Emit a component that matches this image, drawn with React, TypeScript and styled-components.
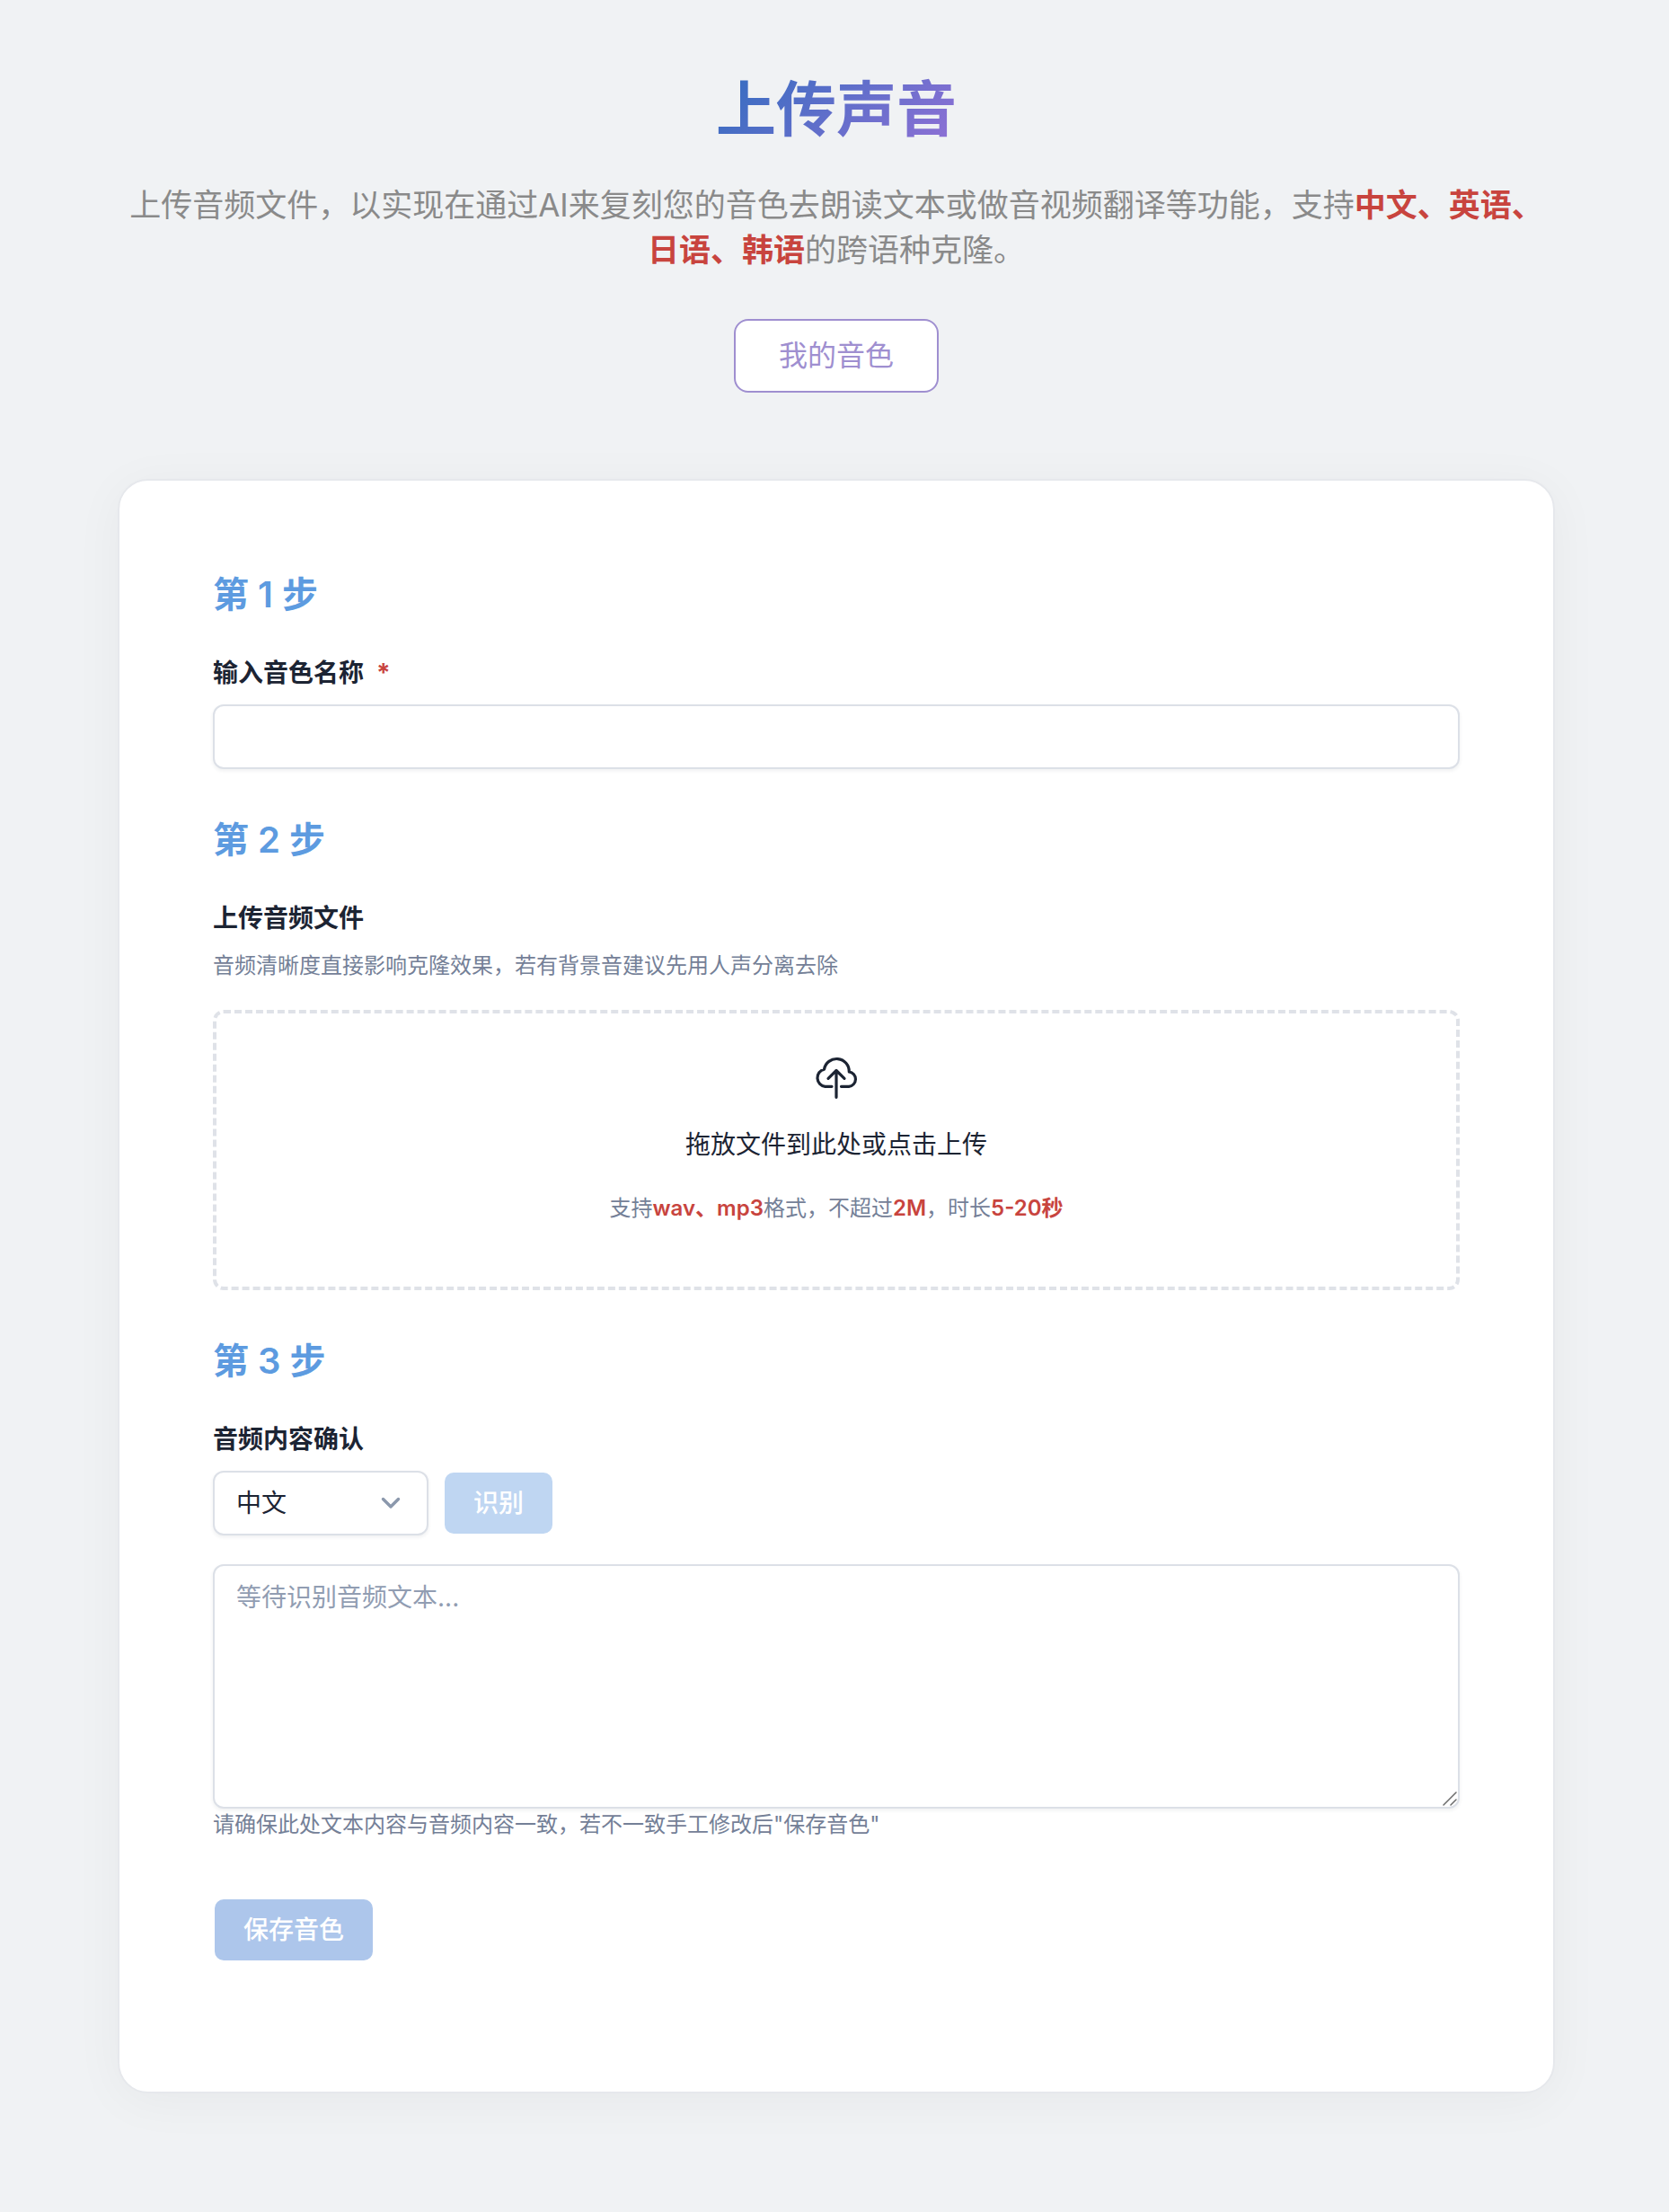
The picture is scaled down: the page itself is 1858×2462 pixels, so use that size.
import React from 'react';
import styled, { createGlobalStyle } from 'styled-components';

const GlobalStyle = createGlobalStyle`
  *, *::before, *::after { box-sizing: border-box; }
  body {
    margin: 0;
    background: #f0f2f4;
    color: #1c2433;
    font-family: Inter, "Noto Sans CJK SC", sans-serif;
    font-size: 28px;
    line-height: 42px;
  }
  button, input, select, textarea { font: inherit; }
`;

const Page = styled.main`
  padding: 72px 127px 132px 131px;
`;

const Intro = styled.header`
  display: flex;
  flex-direction: column;
  align-items: center;
  text-align: center;
`;

const Title = styled.h1`
  margin: 0;
  font-size: 67px;
  line-height: 100px;
  font-weight: 600;
  color: transparent;
  background: linear-gradient(135deg, #2f6dbf, #9370d6);
  background-clip: text;
  -webkit-background-clip: text;
`;

const Summary = styled.p`
  margin: 31px 0 0;
  font-size: 35px;
  line-height: 50px;
  color: #8a8a8a;
`;

const Strong = styled.strong`
  font-weight: 600;
  color: #c8443e;
`;

const OutlineButton = styled.button`
  margin-top: 52px;
  height: 82px;
  padding: 0 48px;
  border: 2px solid #9f8fd0;
  border-radius: 16px;
  background: #fff;
  color: #9f8fd0;
  font-size: 32px;
`;

const Card = styled.form`
  margin-top: 96px;
  padding: 94px 104px 146px;
  border: 2px solid #e6e8ec;
  border-radius: 34px;
  background: #fff;
  box-shadow: 0 8px 56px rgba(0, 0, 0, 0.045);
`;

const Step = styled.section`
  display: flex;
  flex-direction: column;
  margin-bottom: 46px;
`;

const StepTitle = styled.h2`
  margin: 0 0 33px;
  font-size: 40px;
  line-height: 66px;
  font-weight: 600;
  color: #5d9be0;
`;

const Label = styled.label`
  margin-bottom: 14px;
  font-weight: 600;
`;

const Required = styled.span`
  margin-left: 14px;
  color: #c8443e;
  font-weight: 700;
`;

const field = `
  border: 2px solid #dce0e7;
  border-radius: 12px;
  background: #fff;
  color: #1c2433;
  box-shadow: 0 2px 4px rgba(28, 36, 51, 0.07);
`;

const TextInput = styled.input`
  ${field}
  width: 100%;
  height: 72px;
  padding: 0 24px;
`;

const Hint = styled.p`
  margin: 0;
  font-size: 24px;
  line-height: 36px;
  color: #748097;
`;

const DropZone = styled.label`
  display: flex;
  flex-direction: column;
  align-items: center;
  width: 100%;
  height: 312px;
  margin-top: 31px;
  padding-top: 45px;
  border: 4px dashed #dfe2e8;
  border-radius: 12px;
  background: #fff;
  cursor: pointer;
`;

const DropTitle = styled.span`
  margin: 24px 0 32px;
`;

const Row = styled.div`
  display: flex;
  align-items: center;
  gap: 18px;
  margin-bottom: 32px;
`;

const SelectBox = styled.div`
  display: grid;
  width: 240px;
  align-items: center;

  > * { grid-area: 1 / 1; }
  > svg { justify-self: end; margin-right: 28px; pointer-events: none; }
`;

const Select = styled.select`
  ${field}
  width: 100%;
  height: 72px;
  padding: 0 24px;
  appearance: none;
`;

const SolidButton = styled.button<{ $tone: string }>`
  height: 68px;
  padding: 0 32px;
  border: 0;
  border-radius: 10px;
  background: ${(p) => p.$tone};
  color: #fff;
  font-weight: 500;
`;

const TextAreaBox = styled.div`
  display: grid;

  > * { grid-area: 1 / 1; }
  > svg { place-self: end; margin: 3px; pointer-events: none; }
`;

const TextArea = styled.textarea`
  ${field}
  display: block;
  width: 100%;
  height: 272px;
  padding: 14px 24px;
  resize: vertical;

  &::placeholder { color: #919db2; opacity: 1; }
  &::-webkit-resizer { background: transparent; }
`;

const Actions = styled.div`
  padding: 19px 2px 0;
`;

const CloudUpload = () => (
  <svg width="56" height="56" viewBox="8 8 56 56" fill="none" stroke="currentColor" strokeWidth="3.2" strokeLinecap="round" strokeLinejoin="round" aria-hidden="true">
    <path d="M31 44.300H23.600A9.700 9.700 0 0 1 22.500 25.200A14 14 0 0 1 50.300 28A8.200 8.200 0 0 1 50 44.300H41.500" />
    <path d="M36 56.300V26.500M27 35.300l9-8.800 9 8.800" />
  </svg>
);

const Chevron = () => (
  <svg width="28" height="28" viewBox="0 0 28 28" fill="none" stroke="#8b98ac" strokeWidth="3.4" strokeLinecap="round" strokeLinejoin="round" aria-hidden="true">
    <path d="M5.500 9.500l8.500 8.500 8.500-8.500" />
  </svg>
);

const ResizeGrip = () => (
  <svg width="16" height="16" viewBox="0 0 16 16" fill="none" stroke="#6b6b6b" strokeWidth="1.500" strokeLinecap="round" aria-hidden="true">
    <path d="M1 15L15 1M9 15l6-6" />
  </svg>
);

export default function App() {
  return (
    <>
      <GlobalStyle />
      <Page>
        <Intro>
          <Title>上传声音</Title>
          <Summary>
            上传音频文件，以实现在通过AI来复刻您的音色去朗读文本或做音视频翻译等功能，支持<Strong>中文、英语、日语、韩语</Strong>的跨语种克隆。
          </Summary>
          <OutlineButton type="button">我的音色</OutlineButton>
        </Intro>
        <Card>
          <Step>
            <StepTitle>第 1 步</StepTitle>
            <Label htmlFor="voice-name">输入音色名称<Required>*</Required></Label>
            <TextInput id="voice-name" type="text" required />
          </Step>
          <Step>
            <StepTitle>第 2 步</StepTitle>
            <Label htmlFor="voice-file">上传音频文件</Label>
            <Hint>音频清晰度直接影响克隆效果，若有背景音建议先用人声分离去除</Hint>
            <DropZone>
              <input id="voice-file" type="file" accept=".wav,.mp3" hidden />
              <CloudUpload />
              <DropTitle>拖放文件到此处或点击上传</DropTitle>
              <Hint as="span">
                支持<Strong>wav、mp3</Strong>格式，不超过<Strong>2M</Strong>，时长<Strong>5-20秒</Strong>
              </Hint>
            </DropZone>
          </Step>
          <Step>
            <StepTitle>第 3 步</StepTitle>
            <Label htmlFor="voice-text">音频内容确认</Label>
            <Row>
              <SelectBox>
                <Select aria-label="语言" defaultValue="zh">
                  <option value="zh">中文</option>
                </Select>
                <Chevron />
              </SelectBox>
              <SolidButton type="button" $tone="#bfd6f2">识别</SolidButton>
            </Row>
            <TextAreaBox>
              <TextArea id="voice-text" placeholder="等待识别音频文本..." />
              <ResizeGrip />
            </TextAreaBox>
            <Hint>请确保此处文本内容与音频内容一致，若不一致手工修改后"保存音色"</Hint>
          </Step>
          <Actions>
            <SolidButton type="submit" $tone="#adc6eb">保存音色</SolidButton>
          </Actions>
        </Card>
      </Page>
    </>
  );
}
